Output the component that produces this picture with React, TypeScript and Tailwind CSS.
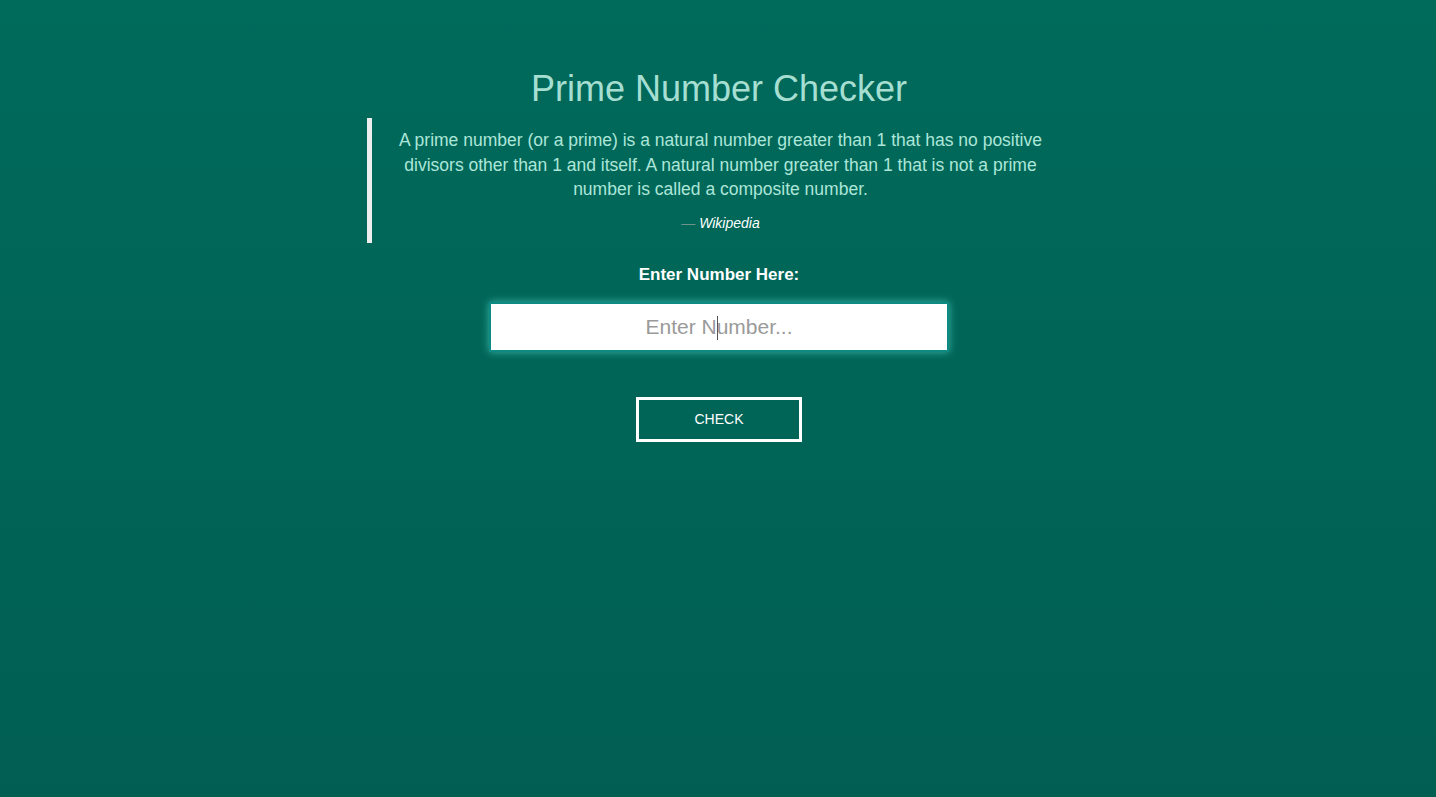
import React from "react";

export default function App() {
  return (
    <div
      className="min-h-[797px] w-full bg-gradient-to-b from-[#006a5b] to-[#005f52] flex flex-col items-center pt-[69px] pl-[2px]"
      style={{ fontFamily: '"Liberation Sans", Arial, sans-serif' }}
    >
      <h1 className="text-[36px] leading-[40px] text-[#a6dfd2] font-normal">Prime Number Checker</h1>
      <blockquote className="mt-[9px] w-[703px] -translate-x-px border-l-[5px] border-[#eeeeee] px-[20px] py-[10px] text-center">
        <p className="text-[17.5px] leading-[24.5px] text-[#ade6d8]">
          A prime number (or a prime) is a natural number greater than 1 that has no positive divisors other than 1
          and itself. A natural number greater than 1 that is not a prime number is called a composite number.
        </p>
        <footer className="mt-[11px] text-[14px] leading-[20px]">
          <span className="text-[#6f948b]">— </span>
          <cite className="italic text-white">Wikipedia</cite>
        </footer>
      </blockquote>
      <label className="mt-[20px] text-[17px] leading-[24px] font-bold text-white">Enter Number Here:</label>
      <div className="relative mt-[15px]">
        <input
          type="text"
          placeholder="Enter Number..."
          className="w-[460px] h-[50px] bg-white border-2 border-[#0d8a82] shadow-[0_0_8px_rgba(70,200,190,0.8)] text-center text-[21px] text-[#555] placeholder:text-[#9a9a9a] outline-none"
        />
        <span className="absolute left-[228px] top-[14px] h-[24px] w-px bg-[#555]" />
      </div>
      <button className="mt-[45px] w-[166px] h-[45px] border-[3px] border-white text-white text-[14px] bg-transparent">
        CHECK
      </button>
    </div>
  );
}
